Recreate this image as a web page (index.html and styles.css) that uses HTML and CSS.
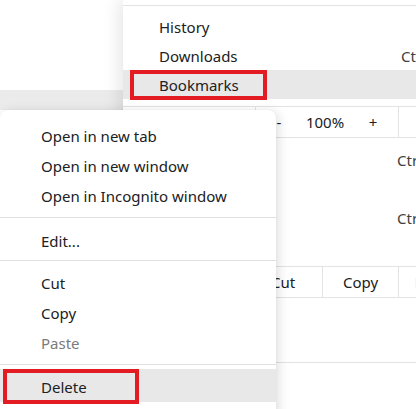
FILE: index.html
```html
<!DOCTYPE html>
<html>
<head>
<meta charset="utf-8">
<link rel="stylesheet" href="styles.css">
</head>
<body>
<div class="page">
  <div class="backdrop">
    <div class="backdrop-hover"></div>
  </div>
  <div class="menu">
    <div class="sep sep-top"></div>
    <div class="item"><span class="label">History</span></div>
    <div class="item"><span class="label">Downloads</span><span class="shortcut shortcut-a">Ctrl+J</span></div>
    <div class="item item-hl"><span class="marked marked-bm">Bookmarks</span></div>
    <div class="sep"></div>
    <div class="zoom-row">
      <span class="zoom-label">Zoom</span>
      <span class="zbtn zminus">-</span>
      <span class="zval">100%</span>
      <span class="zbtn zplus">+</span>
      <span class="zfull"></span>
    </div>
    <div class="sep sep-after-zoom"></div>
    <div class="item"><span class="label">Print...</span><span class="shortcut">Ctrl+P</span></div>
    <div class="item"><span class="label">Cast...</span></div>
    <div class="item"><span class="label">Find...</span><span class="shortcut">Ctrl+F</span></div>
    <div class="item"><span class="label">More tools</span></div>
    <div class="sep sep-before-edit"></div>
    <div class="edit-row">
      <span class="edit-label">Edit</span>
      <span class="ebtn ecut">Cut</span>
      <span class="ebtn ecopy">Copy</span>
      <span class="ebtn epaste">Paste</span>
    </div>
    <div class="sep sep-after-edit"></div>
    <div class="item"><span class="label">Settings</span></div>
    <div class="item"><span class="label">Help</span></div>
    <div class="sep"></div>
    <div class="item"><span class="label">Exit</span></div>
  </div>

  <div class="submenu">
    <div class="sub-item">Open in new tab</div>
    <div class="sub-item">Open in new window</div>
    <div class="sub-item">Open in Incognito window</div>
    <div class="sub-sep"></div>
    <div class="sub-item">Edit...</div>
    <div class="sub-sep sub-sep-b"></div>
    <div class="sub-item">Cut</div>
    <div class="sub-item">Copy</div>
    <div class="sub-item disabled">Paste</div>
    <div class="sub-sep sub-sep-c"></div>
    <div class="sub-item sub-hl"><span class="marked marked-del">Delete</span></div>
  </div>
</div>
</body>
</html>
```

FILE: styles.css
```css
html, body {
  margin: 0;
  padding: 0;
  background: #ffffff;
  overflow: hidden;
}

body {
  width: 416px;
  height: 409px;
  font-family: "Noto Sans", "Open Sans", sans-serif;
  font-size: 15px;
  color: #202124;
}

.page {
  position: relative;
  display: flex;
  width: 416px;
  height: 409px;
  overflow: hidden;
}

.backdrop {
  flex: 0 0 123px;
  display: flex;
  flex-direction: column;
  padding-top: 90px;
}

.backdrop-hover {
  height: 20px;
  background: #ebebeb;
}

.menu {
  flex: 0 0 340px;
  background: #ffffff;
  box-shadow: -4px 0 16px rgba(0, 0, 0, 0.10);
  display: flex;
  flex-direction: column;
  padding-top: 5px;
}

.sep {
  height: 1px;
  background: #e3e3e3;
  margin: 0 0 6px 0;
  flex-shrink: 0;
}

.item {
  height: 29px;
  display: flex;
  align-items: center;
  padding-left: 36px;
  white-space: nowrap;
  flex-shrink: 0;
}

.item-hl {
  background: #e8e8e8;
  margin-bottom: 7px;
  padding-left: 11px;
}

.label {
  width: 230px;
}

.shortcut {
  color: #404040;
  padding-left: 8px;
}

.shortcut-a {
  padding-left: 12px;
}

.marked {
  outline: 4px solid #e31b23;
  outline-offset: 0;
  display: flex;
  align-items: center;
  box-sizing: border-box;
}

.marked-bm {
  width: 129px;
  height: 22px;
  padding-left: 25px;
  margin-top: 1px;
}

.zoom-row {
  height: 30px;
  display: flex;
  align-items: center;
  flex-shrink: 0;
  margin-top: -6px;
}

.zoom-label {
  padding-left: 36px;
  width: 96px;
}

.zbtn, .zval {
  display: flex;
  align-items: center;
  justify-content: center;
  height: 30px;
}

.zminus {
  width: 46px;
  border-left: 1px solid #e3e3e3;
}

.zval {
  width: 46px;
}

.zplus {
  width: 50px;
}

.zfull {
  width: 40px;
  height: 30px;
  border-left: 1px solid #e3e3e3;
}

.sep-after-zoom {
  margin-bottom: 7px;
}

.sep-before-edit {
  margin-top: 5px;
  margin-bottom: 0;
}

.edit-row {
  height: 30px;
  display: flex;
  align-items: center;
  flex-shrink: 0;
}

.edit-label {
  padding-left: 36px;
  width: 85px;
}

.ebtn {
  height: 30px;
  display: flex;
  align-items: center;
  justify-content: center;
}

.ecut {
  width: 78px;
}

.ecopy {
  width: 75px;
  border-left: 1px solid #e3e3e3;
  border-right: 1px solid #e3e3e3;
}

.epaste {
  width: 70px;
}

.sep-after-edit {
  margin-bottom: 6px;
}

/* submenu overlay */
.submenu {
  position: absolute;
  left: 0;
  top: 110px;
  width: 276px;
  height: 320px;
  background: #ffffff;
  border-radius: 8px;
  box-shadow: 2px 2px 12px rgba(0, 0, 0, 0.14), 0 0 2px rgba(0, 0, 0, 0.06);
  display: flex;
  flex-direction: column;
  padding-top: 11px;
}

.sub-item {
  height: 30px;
  display: flex;
  align-items: center;
  padding-left: 41px;
  white-space: nowrap;
  flex-shrink: 0;
}

.disabled {
  color: #7b7b7b;
}

.sub-sep {
  height: 1px;
  background: #e0e0e0;
  margin: 6px 0 8px 0;
  flex-shrink: 0;
}

.sub-sep-b {
  margin: 4px 0 7px 0;
}

.sub-sep-c {
  margin: 6px 0 4px 0;
}

.sub-hl {
  background: #e8e8e8;
  height: 33px;
  padding-left: 7px;
}

.marked-del {
  width: 128px;
  height: 27px;
  padding-left: 34px;
  margin-top: 2px;
}
```
